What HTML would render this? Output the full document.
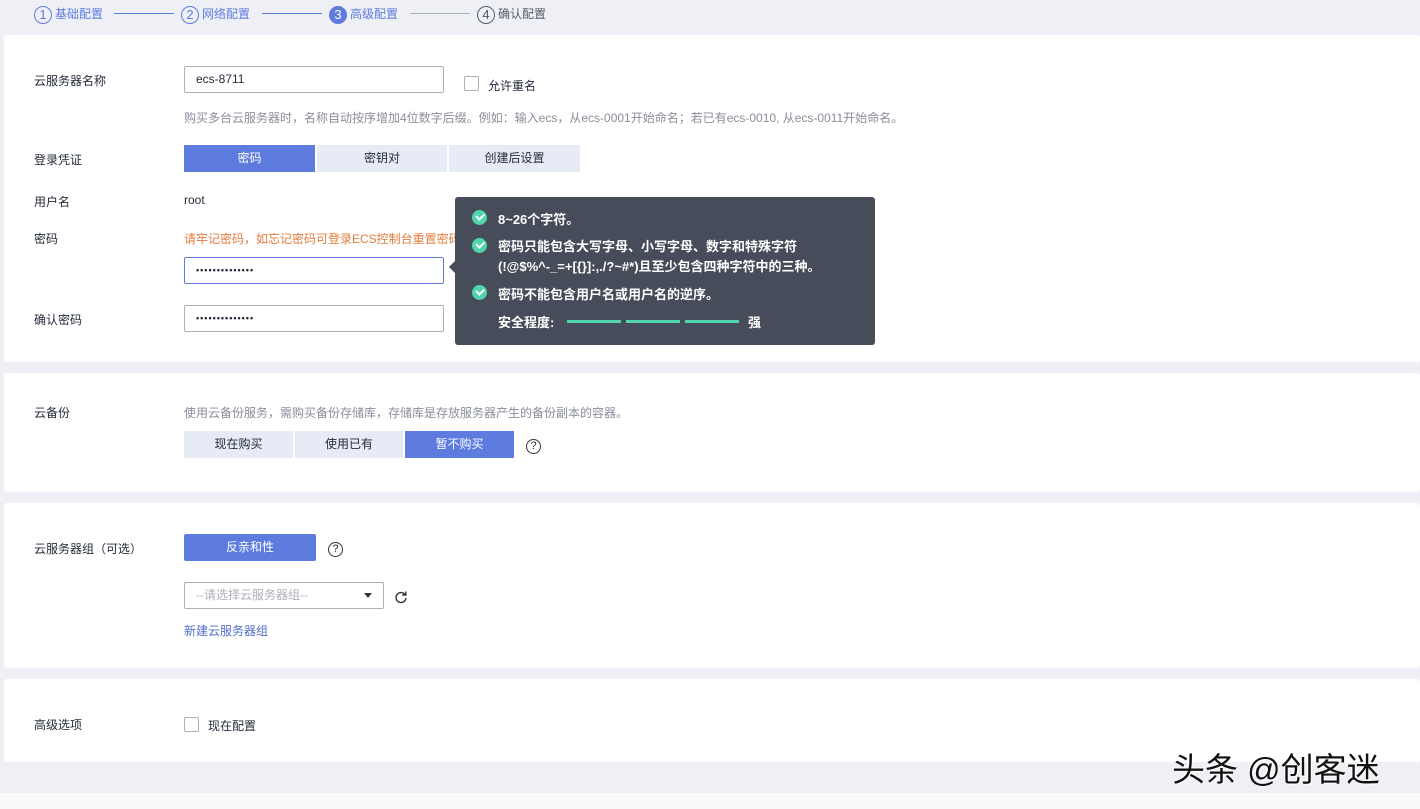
<!DOCTYPE html>
<html><head><meta charset="utf-8"><style>
*{margin:0;padding:0;box-sizing:border-box}
body{width:1420px;height:809px;background:#eef0f5;font-family:"Liberation Sans","Noto Sans CJK SC",sans-serif;font-size:12px;color:#252b3a;position:relative;overflow:hidden}
.a{position:absolute;white-space:nowrap}
.card{position:absolute;left:4px;right:0;background:#fff;border-radius:3px}
.circ{display:inline-block;width:18px;height:18px;border:1px solid #5e7ce0;border-radius:50%;text-align:center;line-height:16px;color:#5e7ce0;font-size:13px;vertical-align:middle;margin-right:3px}
.step{color:#5e7ce0;font-size:12px}
.line{position:absolute;height:1px;background:#5e7ce0;top:13px}
.inp{position:absolute;height:27px;border:1px solid #adb0b8;border-radius:2px;background:#fff;padding-left:11px;line-height:25px;font-size:12px}
.pw{font-size:9px;letter-spacing:1px;font-weight:bold}
.btn{position:absolute;height:27px;line-height:27px;text-align:center;background:#e6ebf5;color:#252b3a}
.btn.on{background:#5e7ce0;color:#fff}
.lab{position:absolute;left:34px}
.q{position:absolute;width:15px;height:15px;border:1.3px solid #333;border-radius:50%;font-size:11px;line-height:13px;text-align:center}
.chk{position:absolute;width:15px;height:15px;border:1px solid #adb0b8;border-radius:2px;background:#fff}
.ok{display:inline-block;width:15px;height:15px;border-radius:50%;background:#50d4ab;position:absolute;left:17px}
.ok:after{content:"";position:absolute;left:4px;top:3px;width:6px;height:3.5px;border-left:2px solid #fff;border-bottom:2px solid #fff;transform:rotate(-45deg)}
.tip .a{font-weight:bold}
</style></head><body>
<div class="a" style="left:34px;top:5px"><span class="circ">1</span><span class="step">基础配置</span></div>
<div class="line" style="left:114px;width:60px"></div>
<div class="a" style="left:181px;top:5px"><span class="circ">2</span><span class="step">网络配置</span></div>
<div class="line" style="left:262px;width:60px"></div>
<div class="a" style="left:329px;top:5px"><span class="circ" style="background:#5e7ce0;color:#fff">3</span><span class="step">高级配置</span></div>
<div class="line" style="left:410px;width:60px;background:#adb0b8"></div>
<div class="a" style="left:477px;top:5px"><span class="circ" style="border-color:#575d6c;color:#575d6c">4</span><span class="step" style="color:#575d6c">确认配置</span></div>

<div class="card" style="top:35px;height:327px"></div>
<div class="lab a" style="top:72px">云服务器名称</div>
<div class="inp" style="left:184px;top:66px;width:260px">ecs-8711</div>
<div class="chk" style="left:464px;top:76px"></div>
<div class="a" style="left:488px;top:77px">允许重名</div>
<div class="a" style="left:184px;top:109px;color:#8a8e99">购买多台云服务器时，名称自动按序增加4位数字后缀。例如：输入ecs，从ecs-0001开始命名；若已有ecs-0010, 从ecs-0011开始命名。</div>
<div class="lab a" style="top:151px">登录凭证</div>
<div class="btn on" style="left:184px;top:145px;width:131px">密码</div>
<div class="btn" style="left:317px;top:145px;width:130px">密钥对</div>
<div class="btn" style="left:449px;top:145px;width:131px">创建后设置</div>
<div class="lab a" style="top:193px">用户名</div>
<div class="a" style="left:184px;top:193px">root</div>
<div class="lab a" style="top:230px">密码</div>
<div class="a" style="left:184px;top:230px;color:#e37c3e">请牢记密码，如忘记密码可登录ECS控制台重置密码</div>
<div class="inp pw" style="left:184px;top:257px;width:260px;border-color:#5e7ce0">••••••••••••••</div>
<div class="lab a" style="top:311px">确认密码</div>
<div class="inp pw" style="left:184px;top:305px;width:260px">••••••••••••••</div>

<div class="a tip" style="left:455px;top:197px;width:420px;height:148px;background:#464c59;border-radius:3px;color:#fff;font-size:13px">
<div style="position:absolute;left:-6px;top:64px;width:0;height:0;border-top:6px solid transparent;border-bottom:6px solid transparent;border-right:6px solid #464c59"></div>
<span class="ok" style="top:13px"></span><div class="a" style="left:43px;top:12px">8~26个字符。</div>
<span class="ok" style="top:41px"></span><div class="a" style="left:43px;top:40px;line-height:20px">密码只能包含大写字母、小写字母、数字和特殊字符<br>(!@$%^-_=+[{}]:,./?~#*)且至少包含四种字符中的三种。</div>
<span class="ok" style="top:88px"></span><div class="a" style="left:43px;top:87px">密码不能包含用户名或用户名的逆序。</div>
<div class="a" style="left:43px;top:115px">安全程度:</div>
<div class="a" style="left:112px;top:123px;width:54px;height:3px;background:#50d4ab"></div>
<div class="a" style="left:171px;top:123px;width:54px;height:3px;background:#50d4ab"></div>
<div class="a" style="left:230px;top:123px;width:54px;height:3px;background:#50d4ab"></div>
<div class="a" style="left:293px;top:115px">强</div>
</div>

<div class="card" style="top:373px;height:119px"></div>
<div class="lab a" style="top:404px">云备份</div>
<div class="a" style="left:184px;top:404px;color:#8a8e99">使用云备份服务，需购买备份存储库，存储库是存放服务器产生的备份副本的容器。</div>
<div class="btn" style="left:184px;top:431px;width:109px">现在购买</div>
<div class="btn" style="left:295px;top:431px;width:108px">使用已有</div>
<div class="btn on" style="left:405px;top:431px;width:109px">暂不购买</div>
<div class="q" style="left:526px;top:439px">?</div>

<div class="card" style="top:503px;height:165px"></div>
<div class="lab a" style="top:540px">云服务器组（可选）</div>
<div class="btn on" style="left:184px;top:534px;width:132px;border-radius:2px">反亲和性</div>
<div class="q" style="left:328px;top:542px">?</div>
<div class="inp" style="left:184px;top:582px;width:200px;color:#adb0b8">--请选择云服务器组--</div>
<div class="a" style="left:364px;top:593px;width:0;height:0;border-left:4px solid transparent;border-right:4px solid transparent;border-top:5px solid #333"></div>
<svg class="a" style="left:394px;top:590px" width="14" height="14" viewBox="0 0 14 14"><path d="M11 4.5A5 5 0 1 0 12 8" fill="none" stroke="#333" stroke-width="1.4"/><path d="M11.8 1.5V5H8.3" fill="none" stroke="#333" stroke-width="1.4"/></svg>
<div class="a" style="left:184px;top:622px;color:#526ecc">新建云服务器组</div>

<div class="card" style="top:679px;height:83px"></div>
<div class="lab a" style="top:716px">高级选项</div>
<div class="chk" style="left:184px;top:717px"></div>
<div class="a" style="left:208px;top:717px">现在配置</div>
<div style="position:absolute;left:0;top:793px;width:1420px;height:16px;background:#fafafa"></div>
<div class="a" style="left:1172px;top:743px;font-size:33px;color:#111;text-shadow:1px 1px 1px #fff,-1px -1px 1px #fff">头条 @创客迷</div>
</body></html>
